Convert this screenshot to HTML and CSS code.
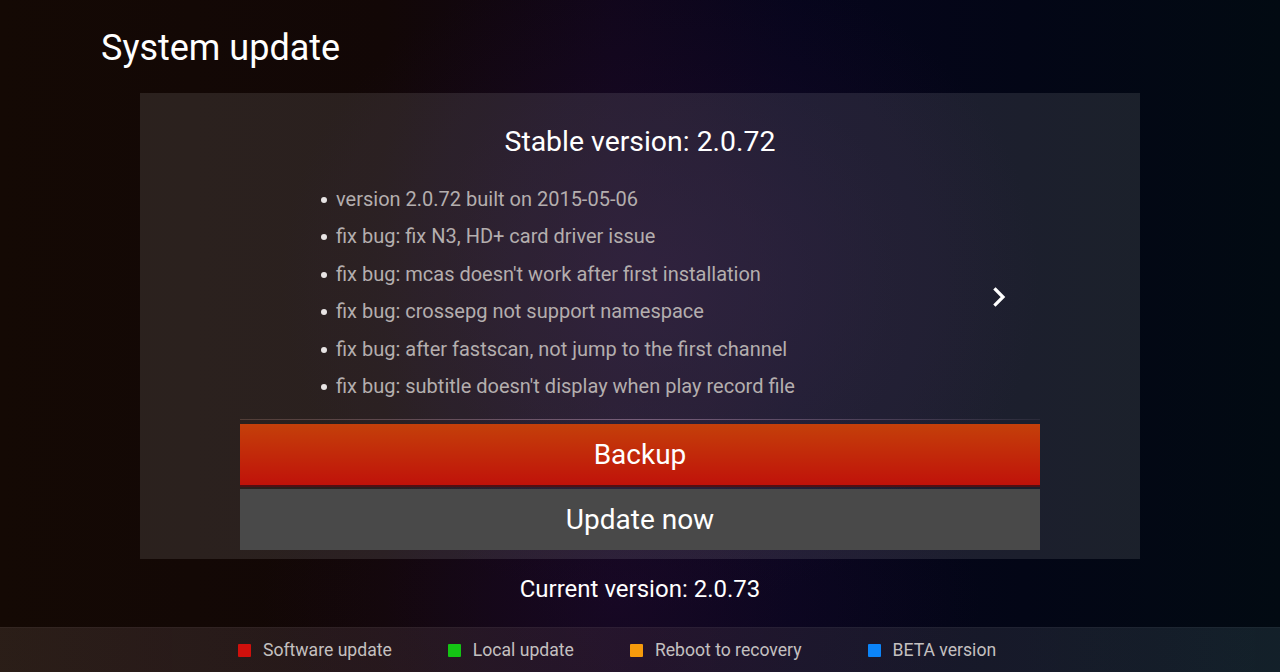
FILE: index.html
```html
<!DOCTYPE html>
<html lang="en">

<head>
    <meta charset="UTF-8">
    <meta name="viewport" content="width=device-width, initial-scale=1.0">
    <title>System update</title>
    <link rel="stylesheet" href="styles.css">
</head>

<body>
    <div class="screen">
        <h1 class="page-title">System update</h1>

        <div class="panel">
            <h2 class="version-title">Stable version: 2.0.72</h2>

            <div class="notes-row">
                <ul class="notes">
                    <li>version 2.0.72 built on 2015-05-06</li>
                    <li>fix bug: fix N3, HD+ card driver issue</li>
                    <li>fix bug: mcas doesn't work after first installation</li>
                    <li>fix bug: crossepg not support namespace</li>
                    <li>fix bug: after fastscan, not jump to the first channel</li>
                    <li>fix bug: subtitle doesn't display when play record file</li>
                </ul>
                <span class="next-arrow">
                    <svg width="16" height="22" viewBox="0 0 16 22">
                        <path d="M3.5 3.5 L11 11 L3.5 18.5" fill="none" stroke="#ffffff" stroke-width="3.2" stroke-linecap="square" />
                    </svg>
                </span>
            </div>

            <div class="divider"></div>

            <div class="actions">
                <button class="btn btn-backup">Backup</button>
                <button class="btn btn-update">Update now</button>
            </div>
        </div>

        <p class="current-version">Current version: 2.0.73</p>

        <div class="legend-bar">
            <div class="legend-item"><span class="key key-red"></span>Software update</div>
            <div class="legend-item"><span class="key key-green"></span>Local update</div>
            <div class="legend-item legend-wide"><span class="key key-orange"></span>Reboot to recovery</div>
            <div class="legend-item"><span class="key key-blue"></span>BETA version</div>
        </div>
    </div>
</body>

</html>
```

FILE: styles.css
```css
:root {
    --panel-bg: rgba(255, 255, 255, 0.1);
    --text-color: #ffffff;
    --note-color: #b4aeae;
    --legend-color: #c4c0c0;
}

* {
    margin: 0;
    padding: 0;
    box-sizing: border-box;
}

body {
    font-family: Roboto, "Noto Sans", sans-serif;
    color: var(--text-color);
    width: 1280px;
    height: 672px;
    overflow: hidden;
    background-color: #0a0608;
    background-image:
        radial-gradient(ellipse 380px 330px at 660px 280px, rgba(34, 12, 50, 0.55), transparent),
        radial-gradient(ellipse 360px 200px at 620px 600px, rgba(30, 10, 46, 0.5), transparent),
        linear-gradient(90deg, #140904 0%, #120706 30%, #10061a 48%, #06051c 62%, #030616 80%, #020a12 100%);
}

.screen {
    height: 100%;
    display: flex;
    flex-direction: column;
}

.page-title {
    font-size: 36px;
    font-weight: 400;
    line-height: 42px;
    padding: 27px 0 0 101px;
    height: 93px;
}

.panel {
    width: 1000px;
    height: 466px;
    margin: 0 auto;
    background: var(--panel-bg);
    display: flex;
    flex-direction: column;
    padding-top: 26px;
}

.version-title {
    font-size: 28.4px;
    font-weight: 400;
    text-align: center;
    line-height: 46px;
}

.notes-row {
    display: flex;
    align-items: center;
    margin-top: 16px;
    padding: 0 132px 0 182px;
}

.notes {
    list-style: none;
    font-size: 20px;
    color: var(--note-color);
}

.notes li {
    height: 37.4px;
    line-height: 37.4px;
    position: relative;
    padding-left: 14px;
}

.notes li::before {
    content: "";
    position: absolute;
    left: -1px;
    top: 16px;
    width: 6px;
    height: 6px;
    border-radius: 50%;
    background: #e8e4e4;
}

.next-arrow {
    margin-left: auto;
    display: flex;
    margin-top: 8px;
}

.divider {
    height: 1px;
    margin: 14px 100px 0;
    background: linear-gradient(90deg, rgba(120, 90, 80, 0.5), rgba(150, 120, 150, 0.7) 50%, rgba(100, 90, 110, 0.2));
}

.actions {
    display: flex;
    flex-direction: column;
    gap: 2px;
    margin: 4px 100px 0;
}

.btn {
    border: none;
    font-family: inherit;
    font-size: 28px;
    color: var(--text-color);
    height: 61px;
    width: 100%;
}

.btn-backup {
    background: linear-gradient(to bottom, #c4400a, #c0120a);
    border-bottom: 2px solid #521014;
    height: 63px;
}

.btn-update {
    background: #494949;
}

.current-version {
    font-size: 24px;
    text-align: center;
    line-height: 28px;
    margin-top: 16px;
}

.legend-bar {
    margin-top: auto;
    height: 45px;
    display: flex;
    align-items: center;
    padding-left: 238px;
    background: linear-gradient(90deg, rgba(70, 55, 48, 0.45), rgba(60, 40, 60, 0.4) 50%, rgba(40, 60, 70, 0.45));
    border-top: 1px solid rgba(255, 255, 255, 0.04);
}

.legend-item {
    display: flex;
    align-items: center;
    font-size: 17.6px;
    color: var(--legend-color);
    margin-right: 56px;
}

.legend-wide {
    margin-right: 66px;
}

.key {
    width: 13px;
    height: 13px;
    margin-right: 12px;
    border-radius: 1px;
}

.key-red {
    background: #d0100c;
}

.key-green {
    background: #14c414;
}

.key-orange {
    background: #f59a0c;
}

.key-blue {
    background: #0c84f8;
}
```
